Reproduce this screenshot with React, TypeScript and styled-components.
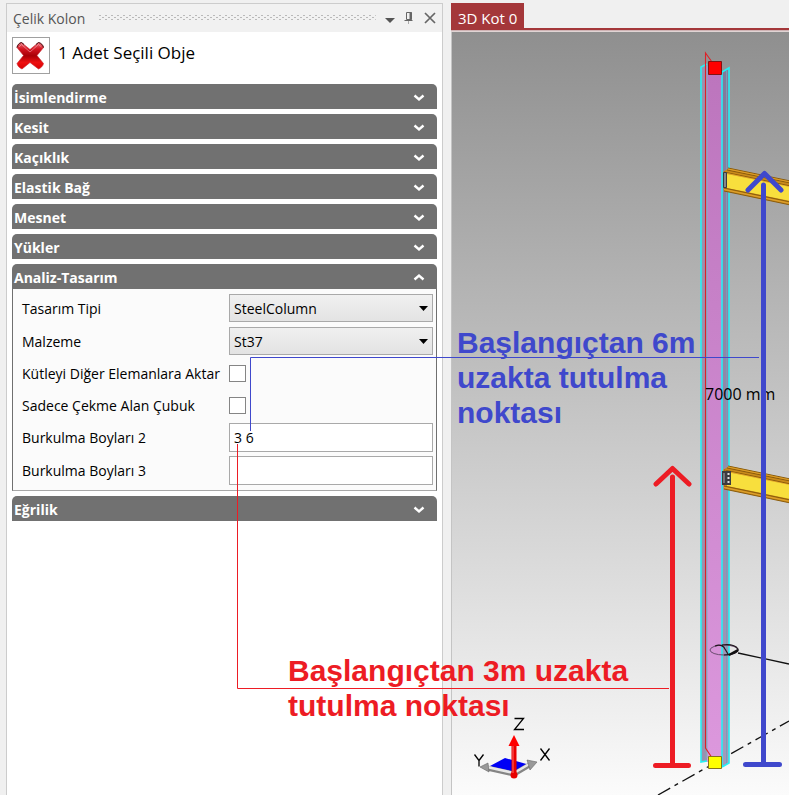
import React, { useState } from "react";
import styled, { createGlobalStyle } from "styled-components";

const GlobalStyle = createGlobalStyle`
  * { box-sizing: border-box; }
  body {
    margin: 0;
    background: #f0f0f0;
    font-family: "Open Sans", "Noto Sans", sans-serif;
    color: #000;
  }
  button, input, select { font: inherit; color: inherit; }
`;

const Workspace = styled.div`
  position: relative;
  display: flex;
  gap: 8px;
  min-height: 100vh;
  padding: 3px 0 0 6px;
  overflow: hidden;
`;

const Dock = styled.aside`
  display: flex;
  flex-direction: column;
  flex: 0 1 437px;
  min-width: 0;
  border: 1px solid #cccccc;
  border-bottom: 0;
  background: #fff;
`;

const DockTitle = styled.header`
  display: flex;
  align-items: center;
  height: 28px;
  padding: 0 2px 0 6px;
  background: #f1f1f1;
  color: #555;
  font-size: 14px;
`;

const Grip = styled.svg`
  flex: 1;
  min-width: 0;
  height: 6px;
  margin: 0 4px 0 14px;
`;

const TitleButton = styled.button`
  display: flex;
  width: 20px;
  height: 20px;
  padding: 0;
  border: 0;
  background: none;
`;

const DockBody = styled.div`
  display: flex;
  flex-direction: column;
  gap: 5px;
  padding: 5px 5px 0;
`;

const Selection = styled.div`
  display: flex;
  gap: 8px;
  height: 42px;
  font-size: 17px;
  line-height: 32px;
`;

const ClearButton = styled.button`
  width: 38px;
  height: 37px;
  padding: 0;
  border: 1px solid #a0a0a0;
  background: #fff;
`;

const SectionHeader = styled.button`
  display: flex;
  align-items: center;
  justify-content: space-between;
  width: 100%;
  height: 25px;
  padding: 2px 12px 0 2px;
  border: 0;
  border-radius: 5px 5px 0 0;
  background: #717171;
  color: #fff;
  font-size: 14px;
  font-weight: 700;
  line-height: 20px;
`;

const Properties = styled.div`
  display: grid;
  grid-template-columns: 207px minmax(0, 1fr);
  grid-template-rows: 29px 28px 28px 28px 29px 29px;
  row-gap: 4px;
  align-items: center;
  padding: 5px 3px 5px 9px;
  border: 1px solid #707070;
  border-top: 0;
  border-bottom-color: #a8a8a8;
  background: #fbfbfb;
  font-size: 14px;
`;

const Label = styled.label`
  white-space: nowrap;
`;

const SelectBox = styled.div`
  display: grid;
  align-self: start;
  align-items: center;
  > * { grid-area: 1 / 1; }
  > svg { justify-self: end; margin-right: 5px; pointer-events: none; }
`;

const Select = styled.select`
  width: 100%;
  height: 28px;
  padding: 0 20px 0 4px;
  border: 1px solid #a9a9a9;
  border-radius: 0;
  appearance: none;
  background: linear-gradient(#f0f0f0, #e3e3e3);
`;

const TextBox = styled.input`
  width: 100%;
  height: 29px;
  padding: 0 4px;
  border: 1px solid #a9a9a9;
  background: #fff;
`;

const CheckBox = styled.input`
  width: 17px;
  height: 17px;
  margin: 0;
  border: 1px solid #858585;
  appearance: none;
  background: #fff;
  &:checked { background: #717171; }
`;

const ViewPane = styled.main`
  display: flex;
  flex-direction: column;
  flex: 1;
  min-width: 0;
`;

const TabStrip = styled.div`
  display: flex;
  height: 29px;
  padding-bottom: 2px;
  background: linear-gradient(#f0f0f0 25px, #a4373a 25px 27px, #d0b4b5 27px 28px, #e0d4d4 28px);
`;

const Tab = styled.button`
  padding: 2px 7px 0;
  border: 0;
  background: #a4373a;
  color: #fff;
  font-size: 15px;
  line-height: 24px;
  white-space: nowrap;
`;

const Viewport = styled.div`
  display: flex;
  flex: 1;
  border-left: 1px solid #c4c4c4;
  background: linear-gradient(#8f8f8f, #fbfbfb);
`;

const Scene = styled.svg`
  display: block;
  flex: 1;
  width: 100%;
  min-width: 0;
  font-family: "Open Sans", "Noto Sans", sans-serif;
`;

const Markup = styled.svg`
  position: absolute;
  inset: 0;
  width: 100%;
  height: 100%;
  pointer-events: none;
`;

const Note = styled.p<{ $x: number; $y: number; $color: string }>`
  position: absolute;
  left: ${(p) => p.$x}px;
  top: ${(p) => p.$y}px;
  margin: 0;
  color: ${(p) => p.$color};
  font: 700 30px/35px "Liberation Sans", Arial, sans-serif;
  white-space: pre;
  pointer-events: none;
`;

const BLUE = "#3f48cc";
const RED = "#ed1c24";

const Chevron = ({ up }: { up?: boolean }) => (
  <svg width="12" height="12" viewBox="0 0 12 12" fill="none" stroke="#fff" strokeWidth="2.4">
    <path d={up ? "M1.5 7.5 6 3.5l4.5 4" : "M1.5 3.5 6 7.5l4.5-4"} />
  </svg>
);

const DropArrow = () => (
  <svg width="9" height="5" viewBox="0 0 9 5">
    <path d="M0 0h9L4.5 5z" />
  </svg>
);

const RedCross = () => (
  <svg width="36" height="35" viewBox="0 0 36 35">
    <defs>
      <linearGradient id="cross" x1="0" y1="0" x2="0" y2="1">
        <stop offset="0" stopColor="#e8717a" />
        <stop offset="0.25" stopColor="#d41420" />
        <stop offset="0.5" stopColor="#a80006" />
        <stop offset="0.75" stopColor="#ed1010" />
        <stop offset="1" stopColor="#d80000" />
      </linearGradient>
    </defs>
    <path
      d="M8.500 4.500 17 11.500l8.500-7c2.500.5 4.500 2.500 5 5L24 17.500l6.500 8c-.5 2.500-2.500 4.500-5 5.500L17 24.500 9 31c-2.500-1-4.500-3-5-5.500l6.500-8-6.500-8c.5-2.500 2-4.500 4.500-5z"
      fill="url(#cross)"
      stroke="#c8202a"
      strokeWidth=".6"
    />
    <path d="M4 9.500c.5-2.500 2-4.500 4.500-5L11 6.500M23 6.500l2.500-2c2.500.5 4.500 2.500 5 5" fill="none" stroke="#41171b" />
    <path d="m6 9 2.500-2.500L17 14l8.500-7.500L28.500 9" fill="none" stroke="#f7a9b0" strokeOpacity=".6" />
  </svg>
);

function Section({ title, children }: { title: string; children?: React.ReactNode }) {
  const [open, setOpen] = useState(Boolean(children));
  return (
    <section>
      <SectionHeader aria-expanded={open} onClick={() => setOpen(!open)}>
        {title}
        <Chevron up={open} />
      </SectionHeader>
      {open && children}
    </section>
  );
}

const Beam = ({ y }: { y: number }) => (
  <g transform={`translate(0 ${y})`}>
    <path d="M723 2 729-2 800 13v24L724 21z" fill="#c98a1b" />
    <path d="M728-2 800 13M724 2l76 16M727 0l73 15" stroke="#8a5c0c" fill="none" />
    <path d="m728-1 72 15M725 3l75 16" stroke="#e5a42c" strokeWidth=".8" fill="none" />
    <path d="m727 4 73 15v14l-73-15z" fill="#f8df3d" />
    <path d="m724 18 76 16M724 21l76 16" stroke="#8a5c0c" fill="none" />
    <path d="m724 19.500 76 16" stroke="#e0a22d" fill="none" />
  </g>
);

const Scene3D = () => (
  <Scene viewBox="452 32 337 763" preserveAspectRatio="xMinYMin slice" role="img" aria-label="3D Kot 0">
    <defs>
      <linearGradient id="web" x1="0" y1="0" x2="0" y2="1">
        <stop stopColor="#bc75bd" />
        <stop offset="1" stopColor="#dc98dd" />
      </linearGradient>
      <linearGradient id="flange" x1="0" y1="0" x2="0" y2="1">
        <stop stopColor="#80799b" />
        <stop offset="1" stopColor="#a39bbd" />
      </linearGradient>
    </defs>
    <path d="m738 653 51 11" stroke="#111" strokeWidth="1.3" />
    <path d="M658 795 789 721" stroke="#111" strokeWidth="1.3" strokeDasharray="14 5 4 5" />
    <path d="m701 67 7-3v697l-7 1z" fill="#8f9bb0" />
    <path d="m722 71 7-3v695l-7 4z" fill="url(#flange)" />
    <path d="M726.5 71v693" stroke="#7b9db5" />
    <path d="M707 67h15v695h-15z" fill="url(#web)" />
    <path d="M703.5 68v692" stroke="#a08cae" strokeWidth="2" />
    <path d="M707 66v692" stroke="#8ba9c6" />
    <path d="m707 64-6 3v695l6-1M722 72v694M722 72l7-4v695l-7 4" stroke="#27eff4" strokeWidth="1.6" fill="none" />
    <path d="m712 62-6.500-9v695l6 9" fill="none" stroke="#df2027" strokeWidth="1.1" />
    <ellipse cx="724" cy="650" rx="14" ry="5" fill="none" stroke="#6b4c70" />
    <path d="M722 645c8-1 14 1 16 4 1 3-5 6-14 6M715 646c5-2 9 0 10 3l3 5" fill="none" stroke="#22181f" strokeWidth="1.2" />
    <path d="m729 655 9-5" stroke="#111" strokeWidth="2.2" />
    <Beam y={170} />
    <path d="M723.5 172.5h3v15h-3z" fill="#85858b" stroke="#3a3a40" />
    <Beam y={468} />
    <path d="M722 471h9v14h-9z" fill="#3b3b40" />
    <path d="M724 473v10" stroke="#74747a" strokeWidth="2" />
    <path d="M728.5 473v11" stroke="#ddd" strokeWidth="2" strokeDasharray="2 2" />
    <path d="M708.5 61.5h13v13h-13z" fill="#f00" stroke="#811313" />
    <path d="M708.5 756.5h13v12h-13z" fill="#ff0" stroke="#86731c" />
    <text x="705" y="400" fontSize="16">7000 mm</text>

    <path d="m490 766 15-8 25 7-16 11z" fill="#0000f5" />
    <path d="m514 774-27-6M514 774l17-10" stroke="#858585" strokeWidth="5" />
    <path d="m514 773-27-6M514 773l17-10" stroke="#e7e7e7" strokeWidth="2.5" />
    <path d="m480 767 8-4 1 9zM537 762l-10-2 3 10z" fill="#999" stroke="#666" strokeWidth=".6" />
    <path d="M514 775v-31" stroke="#e80000" strokeWidth="5" strokeLinecap="round" />
    <circle cx="514" cy="775" r="3.5" fill="#e80000" />
    <path d="m514 735 5.5 11h-11z" fill="#f00" />
    <path d="M513 746v27" stroke="#ff6969" />
    <g fill="none" stroke="#000" strokeWidth="1.3">
      <path d="M514.5 718.5h9l-9 11h9.500M474.5 754.5l4.500 6v6M483.5 754.5l-4.500 6M540.5 748.5l9 12M549.5 748.5l-9 12" />
    </g>
  </Scene>
);

export default function App() {
  return (
    <>
      <GlobalStyle />
      <Workspace>
        <Dock>
          <DockTitle>
            Çelik Kolon
            <Grip aria-hidden="true">
              <defs>
                <pattern id="grip" width="6" height="6" patternUnits="userSpaceOnUse">
                  <path d="M0 0h2v1H0zM3 2h2v1H3zM0 4h2v1H0z" fill="#b9b9b9" />
                </pattern>
              </defs>
              <rect width="100%" height="6" fill="url(#grip)" />
            </Grip>
            <TitleButton aria-label="Menü">
              <svg width="20" height="20" viewBox="0 0 20 20"><path d="M5 10h10l-5 5z" fill="#555" /></svg>
            </TitleButton>
            <TitleButton aria-label="Sabitle">
              <svg width="20" height="20" viewBox="0 0 20 20" fill="none" stroke="#666">
                <path d="M6.500 4.500h5v7h-5zM4.500 12.500h8" />
                <path d="M10.500 4v8" strokeWidth="2" />
                <path d="M8.500 13v3" stroke="#aaa" />
              </svg>
            </TitleButton>
            <TitleButton aria-label="Kapat">
              <svg width="20" height="20" viewBox="0 0 20 20"><path d="m5 5 10 10M15 5 5 15" stroke="#666" strokeWidth="1.7" /></svg>
            </TitleButton>
          </DockTitle>
          <DockBody>
            <Selection>
              <ClearButton aria-label="Seçimi kaldır"><RedCross /></ClearButton>
              1 Adet Seçili Obje
            </Selection>
            <Section title="İsimlendirme" />
            <Section title="Kesit" />
            <Section title="Kaçıklık" />
            <Section title="Elastik Bağ" />
            <Section title="Mesnet" />
            <Section title="Yükler" />
            <Section title="Analiz-Tasarım">
              <Properties>
                <Label htmlFor="type">Tasarım Tipi</Label>
                <SelectBox>
                  <Select id="type"><option>SteelColumn</option></Select>
                  <DropArrow />
                </SelectBox>
                <Label htmlFor="material">Malzeme</Label>
                <SelectBox>
                  <Select id="material"><option>St37</option></Select>
                  <DropArrow />
                </SelectBox>
                <Label htmlFor="mass">Kütleyi Diğer Elemanlara Aktar</Label>
                <CheckBox id="mass" type="checkbox" />
                <Label htmlFor="tension">Sadece Çekme Alan Çubuk</Label>
                <CheckBox id="tension" type="checkbox" />
                <Label htmlFor="buckling2">Burkulma Boyları 2</Label>
                <TextBox id="buckling2" defaultValue="3 6" />
                <Label htmlFor="buckling3">Burkulma Boyları 3</Label>
                <TextBox id="buckling3" />
              </Properties>
            </Section>
            <Section title="Eğrilik" />
          </DockBody>
        </Dock>
        <ViewPane>
          <TabStrip><Tab>3D Kot 0</Tab></TabStrip>
          <Viewport><Scene3D /></Viewport>
        </ViewPane>
        <Markup aria-hidden="true" fill="none">
          <path d="M250.5 431v-73.500H759" stroke={BLUE} />
          <path d="M237.5 444v244.500H669" stroke={RED} />
          <g stroke={RED} strokeWidth="5" strokeLinecap="round" strokeLinejoin="round">
            <path d="M672.5 477v288M656 484l16.500-15.500L689 484M655.5 765.500h33" />
          </g>
          <g stroke={BLUE} strokeWidth="5" strokeLinecap="round" strokeLinejoin="round">
            <path d="M763.5 185v579M748 190l16.500-16.500L781 190M745.5 764.500h34" />
          </g>
        </Markup>
        <Note $x={457} $y={325} $color={BLUE}>{"Başlangıçtan 6m\nuzakta tutulma\nnoktası"}</Note>
        <Note $x={288} $y={653} $color={RED}>{"Başlangıçtan 3m uzakta\ntutulma noktası"}</Note>
      </Workspace>
    </>
  );
}
